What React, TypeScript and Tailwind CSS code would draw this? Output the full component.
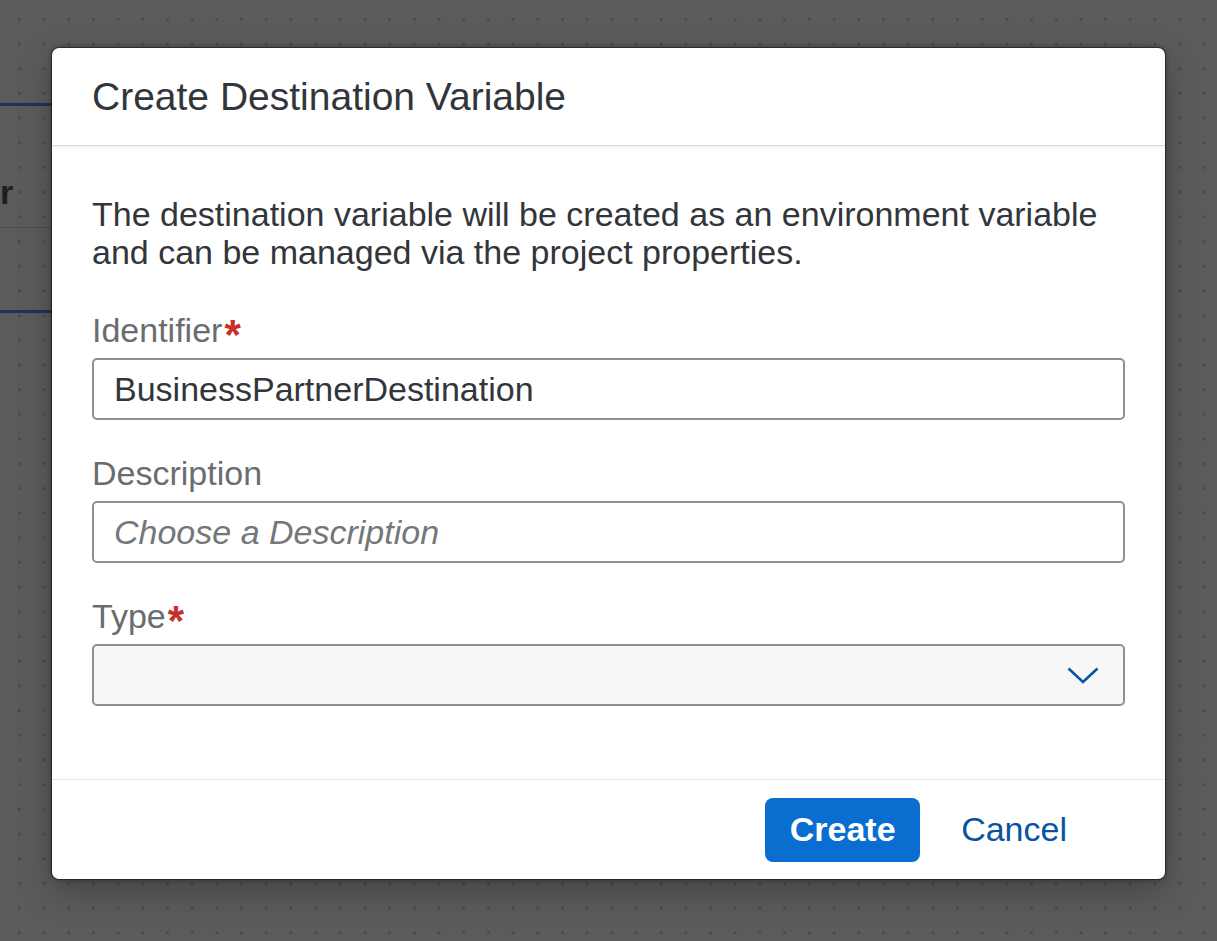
export default function App() {
  return (
    <div className="relative h-[941px] w-full overflow-hidden bg-[#5b5b5b] bg-[radial-gradient(circle,#494949_1.2px,transparent_1.7px)] bg-size-[24.7px_24.7px] bg-position-[7px_7px] font-['Liberation_Sans',Arial,sans-serif]">
      {/* page behind the dialog, dimmed */}
      <div className="w-[80px] pt-[103px]">
        <div className="h-[3px] bg-[#1b3556]" />
        <div className="flex h-[122px] items-end border-b border-[#4c4c4c] pb-[21px]">
          <span className="text-[34px] font-bold leading-[28px] text-[#1e1e1e]">r</span>
        </div>
        <div className="h-[82px]" />
        <div className="h-[3px] bg-[#1b3556]" />
      </div>

      {/* dialog layer */}
      <div className="absolute inset-0 flex justify-center pt-[48px]">
        <div className="flex h-[831px] w-[1113px] flex-col overflow-hidden rounded-[7px] bg-white shadow-[0_0_0_1px_rgba(0,0,0,0.35),0_0_5px_rgba(0,0,0,0.45),0_12px_32px_rgba(0,0,0,0.25)]">
          <div className="flex h-[98px] items-center border-b border-[#d9d9d9] px-[40px] shadow-[0_2px_3px_rgba(0,0,0,0.04)]">
            <h1 className="text-[39px] leading-[44px] text-[#32363a]">Create Destination Variable</h1>
          </div>

          <div className="flex-1 px-[40px] pt-[49px]">
            <p className="text-[34px] leading-[38px] text-[#32363a]">
              The destination variable will be created as an environment variable and can be managed via the project properties.
            </p>

            <label className="mt-[40px] block h-[38px] text-[34px] leading-[38px] text-[#6a6d70]">
              Identifier
              <span className="ml-[2px] align-[-7px] text-[42px] font-bold leading-none text-[#c9302c]">*</span>
            </label>
            <div className="mt-[9px] flex h-[62px] items-center rounded-[5px] border-2 border-[#89919a] bg-white px-[20px] text-[34px] text-[#32363a]">
              BusinessPartnerDestination
            </div>

            <label className="mt-[34px] block h-[38px] text-[34px] leading-[38px] text-[#6a6d70]">Description</label>
            <div className="mt-[9px] flex h-[62px] items-center rounded-[5px] border-2 border-[#89919a] bg-white px-[20px] text-[34px] italic text-[#74777a]">
              Choose a Description
            </div>

            <label className="mt-[34px] block h-[38px] text-[34px] leading-[38px] text-[#6a6d70]">
              Type
              <span className="ml-[2px] align-[-7px] text-[42px] font-bold leading-none text-[#c9302c]">*</span>
            </label>
            <div className="mt-[9px] flex h-[62px] items-center justify-end rounded-[5px] border-2 border-[#89919a] bg-[#f7f7f7] pr-[24px]">
              <svg width="32" height="17" viewBox="0 0 32 17" fill="none">
                <polyline points="1.5,1.5 16,15 30.5,1.5" stroke="#0854a0" strokeWidth="2.6" />
              </svg>
            </div>
          </div>

          <div className="flex h-[100px] items-center justify-end gap-[21px] border-t border-[#e5e5e5] pr-[78px]">
            <button className="flex h-[64px] w-[155px] items-center justify-center rounded-[8px] bg-[#0a6ed1] text-[34px] font-bold text-white">
              Create
            </button>
            <button className="flex h-[64px] items-center px-[20px] text-[34px] text-[#0854a0]">Cancel</button>
          </div>
        </div>
      </div>
    </div>
  );
}
